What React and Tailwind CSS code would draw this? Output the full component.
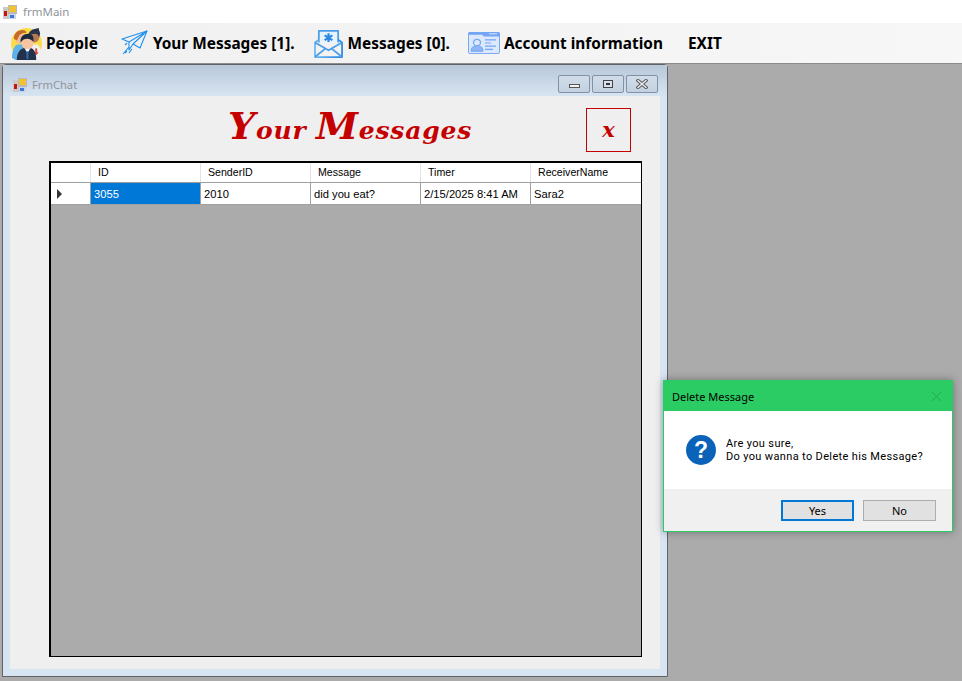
import { X } from "lucide-react";

const columns = ["ID", "SenderID", "Message", "Timer", "ReceiverName"];
const cells = ["3055", "2010", "did you eat?", "2/15/2025 8:41 AM", "Sara2"];

function AppIcon() {
  return (
    <svg width="14" height="14" viewBox="0 0 14 14" className="shrink-0">
      <rect x="0" y="2" width="8" height="12" fill="#c9c9c9" />
      <rect x="1" y="6" width="3" height="5" fill="#c4160c" />
      <rect x="5" y="0" width="9" height="9" fill="#b9b9b9" />
      <rect x="6" y="1" width="7" height="6" fill="#f2c230" />
      <rect x="6" y="9" width="7" height="5" fill="#c9d4e6" />
      <rect x="7" y="10" width="4" height="3" fill="#3b78d8" />
    </svg>
  );
}

function PeopleIcon() {
  return (
    <svg width="33" height="33" viewBox="0 0 34 34" className="shrink-0">
      <circle cx="17" cy="17" r="16" fill="#fbdc4a" />
      <path d="M2 32c0-7 2-13 6-14h7v16H6z" fill="#5fb2e6" />
      <circle cx="11" cy="12" r="5.5" fill="#f3bf98" />
      <path d="M4 12c0-6 4-9 9-9 2 0 4 1 4 3-3 0-5 1-7 2-1 2-2 4-3 6z" fill="#c66a2c" />
      <path d="M20 18h8c3 2 4 6 4 9l-5 6h-7z" fill="#eef1f4" />
      <circle cx="25" cy="11" r="5" fill="#b47a58" />
      <path d="M19 9c0-5 4-7 11-8-1 2 1 3 1 6l-1 4c-1-3-2-4-4-4-3 0-5 1-7 2z" fill="#29344a" />
      <rect x="26" y="22" width="2" height="6" fill="#e5413a" />
      <path d="M24.500 26h5l-2.500 3z" fill="#e5413a" />
      <path d="M7 34c0-7 3-11 7-12h8c3 1 5 5 5 12z" fill="#22324c" />
      <path d="M15 22h6l-3 5z" fill="#fff" />
      <rect x="17" y="25" width="2" height="8" fill="#2f6ea8" />
      <circle cx="18" cy="17" r="6" fill="#f6c6a2" />
      <path d="M11 16c-1-6 3-9 8-9 4 0 6 3 5 8-2-2-4-3-6-3-3 0-5 1-7 4z" fill="#1f2a3f" />
    </svg>
  );
}

function PlaneIcon() {
  return (
    <svg width="28" height="26" viewBox="0 0 28 26" fill="none" stroke="#1e90ee" strokeWidth="1.100" strokeLinejoin="round" className="shrink-0">
      <path d="M1 9 L26 1 L19 18 L12 14 L8 20 L8 12 Z" />
      <path d="M26 1 L8 12 M26 1 L12 14" />
      <path d="M6 13 L4 15 M8 17 L2 24 M11 19 L8 23 M6 21 L4 23" />
    </svg>
  );
}

function MailIcon() {
  return (
    <svg width="29" height="29" viewBox="0 0 30 30" fill="none" strokeWidth="1.800" strokeLinejoin="round" className="shrink-0">
      <defs>
        <linearGradient id="mailBlue" x1="0" y1="0" x2="1" y2="0">
          <stop offset="0" stopColor="#6db6f2" />
          <stop offset="1" stopColor="#2a86e2" />
        </linearGradient>
      </defs>
      <path d="M5 14V2h20v12" stroke="#4a9de8" fill="#e6f2fc" />
      <path d="M5 11 1 14v15h28V14l-4-3" stroke="url(#mailBlue)" />
      <path d="M1 14 15 22 29 14M1 29 12 20M29 29 18 20" stroke="#4a9de8" />
      <path d="M15 4.500v9M11 6.500l8 5M19 6.500l-8 5" stroke="#2a86e2" strokeWidth="2.200" />
    </svg>
  );
}

function CardIcon() {
  return (
    <svg width="32" height="22" viewBox="0 0 32 24" preserveAspectRatio="none" className="shrink-0">
      <rect x="0.500" y="0.500" width="31" height="23" rx="1.500" fill="#dce9fd" stroke="#74a5f5" />
      <path d="M0 2a2 2 0 0 1 2-2h28a2 2 0 0 1 2 2v3H16l-2-2H0z" fill="#74a5f5" />
      <rect x="21" y="1.500" width="8" height="1" fill="#dce9fd" />
      <circle cx="9" cy="11.500" r="3.500" fill="#dce9fd" stroke="#74a5f5" strokeWidth="1.300" />
      <path d="M3 21c0-4 2-6 6-6s6 2 6 6z" fill="#8fb6f6" stroke="#74a5f5" />
      <path d="M17 8.500h11M17 12h6M17 15.500h11M17 19h8" stroke="#74a5f5" strokeWidth="1.300" />
    </svg>
  );
}

function MenuItem({ icon, label, className }) {
  return (
    <div className={`flex items-center ${className}`}>
      {icon}
      <span className="pt-[2px] text-[15.400px] font-bold text-black whitespace-nowrap leading-none">{label}</span>
    </div>
  );
}

function CaptionButton({ children }) {
  return (
    <div className="w-[32px] h-[18px] rounded-[2px] border border-[#8291a8] bg-gradient-to-b from-[#d2dde9] to-[#c2d0e1] flex items-center justify-center">
      {children}
    </div>
  );
}

function DataGrid() {
  return (
    <div className="ml-[39px] w-[593px] h-[496px] border border-black border-t-2 border-l-2 bg-[#ababab] font-['Liberation_Sans',sans-serif] text-[11.200px] text-black">
      <div className="grid grid-cols-[40px_110px_110px_110px_110px_110px] h-[20px] bg-white border-b border-[#a0a0a0] text-[10.600px]">
        <div className="border-r border-[#e3e3e3]" />
        {columns.map((c) => (
          <div key={c} className="pl-[7px] flex items-center border-r border-[#e3e3e3] last:border-r-0">
            {c}
          </div>
        ))}
      </div>
      <div className="grid grid-cols-[40px_110px_110px_110px_110px_110px] h-[22px] bg-white border-b border-[#a0a0a0]">
        <div className="flex items-center pl-[6px] border-r border-[#a0a0a0]">
          <div className="w-0 h-0 border-y-[5px] border-y-transparent border-l-[5px] border-l-[#333]" />
        </div>
        {cells.map((c, i) => (
          <div
            key={c}
            className={
              i === 0
                ? "pl-[3px] pt-[1px] flex items-center bg-[#0078d7] text-white border-r border-[#a0a0a0]"
                : "pl-[3px] pt-[1px] flex items-center border-r border-[#a0a0a0] last:border-r-0"
            }
          >
            {c}
          </div>
        ))}
      </div>
    </div>
  );
}

function ChildWindow() {
  return (
    <div className="absolute left-[2px] top-[64px] w-[666px] h-[613px] rounded-t-[4px] border border-[#606266] flex flex-col">
      <div className="h-[31px] pl-[7px] pr-[9px] bg-gradient-to-b from-[#b8c8d9] to-[#d7e4f2] flex items-center justify-between">
        <div className="flex items-center gap-[5px] mt-[8px] ml-[3px]">
          <AppIcon />
          <span className="text-[11.200px] text-[#8f949a] font-['Noto_Sans',sans-serif] leading-none">FrmChat</span>
        </div>
        <div className="flex gap-[2px] mt-[7px]">
          <CaptionButton>
            <div className="w-[11px] h-[4px] mt-[3px] bg-[#f2f2f2] border border-[#555]" />
          </CaptionButton>
          <CaptionButton>
            <div className="w-[10px] h-[8px] bg-[#d8e0ea] border border-[#444] flex items-center justify-center">
              <div className="w-[4px] h-[2px] bg-[#333]" />
            </div>
          </CaptionButton>
          <CaptionButton>
            <svg width="12" height="10" viewBox="0 0 12 10" fill="none" strokeLinecap="square">
              <path d="M2 1.500 10 8.500M10 1.500 2 8.500" stroke="#555" strokeWidth="3.200" />
              <path d="M2 1.500 10 8.500M10 1.500 2 8.500" stroke="#eef1f5" strokeWidth="1.400" />
            </svg>
          </CaptionButton>
        </div>
      </div>
      <div className="flex-1 bg-[#d7e4f2] px-[7px] pb-[7px] flex">
        <div className="flex-1 bg-[#efefef] flex flex-col">
          <div className="flex h-[53px] mt-[12px]">
            <div className="ml-[218px] w-[340px] h-[36px] flex items-baseline text-[25px] leading-[36px] tracking-[0.800px] font-bold italic text-[#c50000] font-['DejaVu_Serif',serif] whitespace-pre">
              <span className="text-[38px]">Y</span>
              <span>our </span>
              <span className="text-[38px]">M</span>
              <span>essages</span>
            </div>
            <div className="ml-[18px] w-[45px] h-[44px] border border-[#c50000] flex items-center justify-center text-[21px] font-bold italic text-[#c50000] font-['DejaVu_Serif',serif]">
              x
            </div>
          </div>
          <DataGrid />
        </div>
      </div>
    </div>
  );
}

function MessageBox() {
  return (
    <div className="absolute left-[663px] top-[380px] w-[290px] h-[152px] border border-[#2bcc63] shadow-[0_0_8px_rgba(0,0,0,0.35)] flex flex-col font-['Noto_Sans',sans-serif]">
      <div className="h-[30px] bg-[#2bcc63] flex items-center justify-between pl-[8px] pr-[7px]">
        <span className="text-[11px] text-black leading-none">Delete Message</span>
        <X size={17} strokeWidth={1} className="text-[#1c9d49]" />
      </div>
      <div className="h-[78px] bg-white flex items-start pl-[22px] pt-[24px]">
        <svg width="30" height="30" viewBox="0 0 30 30" className="shrink-0">
          <circle cx="15" cy="15" r="15" fill="#0a63b8" />
          <text x="15" y="23" textAnchor="middle" fontSize="23" fontWeight="700" fill="#fff" fontFamily="Liberation Sans">?</text>
        </svg>
        <div className="ml-[10px] mt-[2px] text-[11px] leading-[13px] tracking-[0.350px] text-black whitespace-nowrap font-['Roboto',sans-serif]">
          <div>Are you sure,</div>
          <div>Do you wanna to Delete his Message?</div>
        </div>
      </div>
      <div className="flex-1 bg-[#f0f0f0] flex justify-end gap-[9px] pt-[11px] pr-[16px]">
        <button className="w-[73px] h-[21px] bg-[#e1e1e1] border-2 border-[#0078d7] text-[11px] leading-none text-black">Yes</button>
        <button className="w-[73px] h-[21px] bg-[#e1e1e1] border border-[#adadad] text-[11px] leading-none text-black">No</button>
      </div>
    </div>
  );
}

export default function App() {
  return (
    <div className="relative w-[962px] h-[681px] overflow-hidden bg-[#ababab] font-['Noto_Sans',sans-serif]">
      {/* title bar */}
      <div className="h-[23px] bg-white flex items-center pl-[3px] gap-[6px]">
        <AppIcon />
        <span className="text-[11.500px] text-[#8f949a] leading-none">frmMain</span>
      </div>

      {/* menu strip */}
      <div className="h-[41px] bg-gradient-to-r from-[#f0f0f0] to-[#f7f7f7] border-b border-[#8c8c8c] flex items-center">
        <MenuItem icon={<PeopleIcon />} label="People" className="ml-[10px] gap-[3px]" />
        <MenuItem icon={<PlaneIcon />} label="Your Messages [1]." className="ml-[23px] gap-[4px]" />
        <MenuItem icon={<MailIcon />} label="Messages [0]." className="ml-[19px] gap-[5px]" />
        <MenuItem icon={<CardIcon />} label="Account information" className="ml-[18px] gap-[4px]" />
        <MenuItem label="EXIT" className="ml-[25px]" />
      </div>

      <ChildWindow />
      <MessageBox />
    </div>
  );
}
